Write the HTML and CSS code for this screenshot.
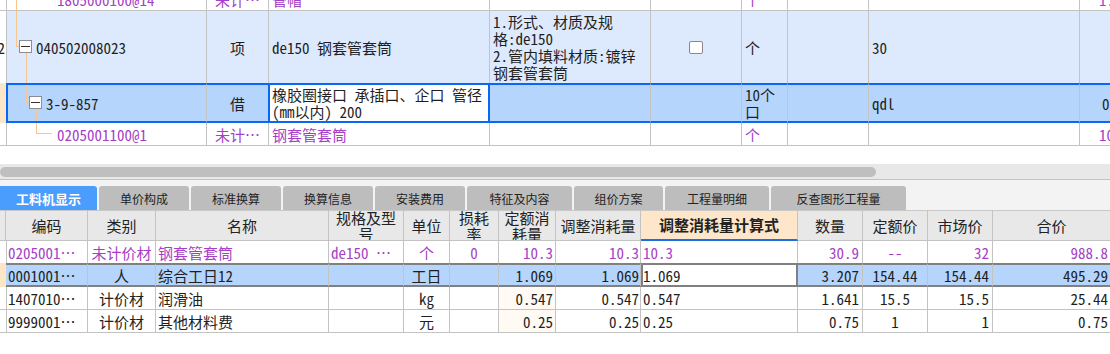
FILE: index.html
```html
<!DOCTYPE html>
<html lang="zh-CN">
<head>
<meta charset="utf-8">
<title>工料机显示</title>
<link rel="stylesheet" href="styles.css">
</head>
<body>
<div class="top">
  <div class="top-inner">
    <div class="trow r0">
      <div class="tc idx"></div>
      <div class="tc code p0 pur"><span class="ln ta0"></span>1805000100@14</div>
      <div class="tc c pur">未计…</div>
      <div class="tc pur">管帽</div>
      <div class="tc"></div>
      <div class="tc"></div>
      <div class="tc pur">个</div>
      <div class="tc"></div>
      <div class="tc"></div>
      <div class="tc last pur">1.545</div>
    </div>
    <div class="trow r1">
      <div class="tc idx">2</div>
      <div class="tc code p1"><span class="ln tb1"></span><span class="ln tb2"></span><span class="bx tb3"></span><span class="ln tb4"></span>040502008023</div>
      <div class="tc c">项</div>
      <div class="tc">de150 钢套管套筒</div>
      <div class="tc"><div>1.形式、材质及规<br>格:de150<br>2.管内填料材质:镀锌<br>钢套管套筒</div></div>
      <div class="tc c"><span class="chk"></span></div>
      <div class="tc">个</div>
      <div class="tc"></div>
      <div class="tc">30</div>
      <div class="tc last"></div>
    </div>
    <div class="trow r2">
      <div class="tc idx"></div>
      <div class="tc code p2"><span class="ln tc1"></span><span class="ln tc2"></span><span class="bx tc3"></span><span class="ln tc4"></span>3-9-857</div>
      <div class="tc c pre">借</div>
      <div class="tc edit"><div>橡胶圈接口 承插口、企口 管径<br>(mm以内) 200</div></div>
      <div class="tc"></div>
      <div class="tc"></div>
      <div class="tc"><div>10个<br>口</div></div>
      <div class="tc"></div>
      <div class="tc">qdl</div>
      <div class="tc last sh">0.103</div>
    </div>
    <div class="trow r3">
      <div class="tc idx"></div>
      <div class="tc code p0 pur"><span class="ln td1"></span><span class="ln td2"></span>0205001100@1</div>
      <div class="tc c pur">未计…</div>
      <div class="tc pur">钢套管套筒</div>
      <div class="tc"></div>
      <div class="tc"></div>
      <div class="tc pur">个</div>
      <div class="tc"></div>
      <div class="tc"></div>
      <div class="tc last pur">10.3</div>
    </div>
  </div>
</div>

<div class="gap"></div>
<div class="hs"><div class="thumb"></div></div>
<div class="hsline"></div>

<div class="tabs">
  <div class="tab on w97">工料机显示</div>
  <div class="tab w90">单价构成</div>
  <div class="tab w90">标准换算</div>
  <div class="tab w90">换算信息</div>
  <div class="tab w90">安装费用</div>
  <div class="tab w105">特征及内容</div>
  <div class="tab w89">组价方案</div>
  <div class="tab w104">工程量明细</div>
  <div class="tab w135">反查图形工程量</div>
</div>

<div class="btable">
  <div class="brow hd">
    <div class="bc idx"></div>
    <div class="bc">编码</div>
    <div class="bc">类别</div>
    <div class="bc">名称</div>
    <div class="bc"><div>规格及型<br>号</div></div>
    <div class="bc">单位</div>
    <div class="bc"><div>损耗<br>率</div></div>
    <div class="bc"><div>定额消<br>耗量</div></div>
    <div class="bc">调整消耗量</div>
    <div class="bc calc">调整消耗量计算式</div>
    <div class="bc">数量</div>
    <div class="bc">定额价</div>
    <div class="bc">市场价</div>
    <div class="bc">合价</div>
  </div>
  <div class="brow d1 pur">
    <div class="bc idx"></div>
    <div class="bc code">0205001…</div>
    <div class="bc c">未计价材</div>
    <div class="bc name">钢套管套筒</div>
    <div class="bc spec">de150 …</div>
    <div class="bc c">个</div>
    <div class="bc c">0</div>
    <div class="bc r q1">10.3</div>
    <div class="bc r q2">10.3</div>
    <div class="bc f">10.3</div>
    <div class="bc r">30.9</div>
    <div class="bc c">--</div>
    <div class="bc r">32</div>
    <div class="bc r tot">988.8</div>
  </div>
  <div class="brow d2">
    <div class="bc idx"></div>
    <div class="bc code">0001001…</div>
    <div class="bc c">人</div>
    <div class="bc name">综合工日12</div>
    <div class="bc spec"></div>
    <div class="bc c">工日</div>
    <div class="bc c"></div>
    <div class="bc r q1">1.069</div>
    <div class="bc r q2">1.069</div>
    <div class="bc f edit">1.069</div>
    <div class="bc r">3.207</div>
    <div class="bc c">154.44</div>
    <div class="bc r">154.44</div>
    <div class="bc r tot">495.29</div>
  </div>
  <div class="brow d3">
    <div class="bc idx"></div>
    <div class="bc code">1407010…</div>
    <div class="bc c">计价材</div>
    <div class="bc name">润滑油</div>
    <div class="bc spec"></div>
    <div class="bc c">kg</div>
    <div class="bc c"></div>
    <div class="bc r q1 pk">0.547</div>
    <div class="bc r q2">0.547</div>
    <div class="bc f">0.547</div>
    <div class="bc r">1.641</div>
    <div class="bc c">15.5</div>
    <div class="bc r">15.5</div>
    <div class="bc r tot">25.44</div>
  </div>
  <div class="brow d3">
    <div class="bc idx"></div>
    <div class="bc code">9999001…</div>
    <div class="bc c">计价材</div>
    <div class="bc name">其他材料费</div>
    <div class="bc spec"></div>
    <div class="bc c">元</div>
    <div class="bc c"></div>
    <div class="bc r q1 pk">0.25</div>
    <div class="bc r q2">0.25</div>
    <div class="bc f">0.25</div>
    <div class="bc r">0.75</div>
    <div class="bc c">1</div>
    <div class="bc r">1</div>
    <div class="bc r tot">0.75</div>
  </div>
</div>
</body>
</html>
```

FILE: styles.css
```css
* { box-sizing: border-box; margin: 0; padding: 0; }
html, body { width: 1110px; height: 354px; overflow: hidden; background: #fff; }
body {
  font-family: "Noto Sans Mono CJK SC", "Noto Sans CJK SC", "DejaVu Sans Mono", monospace;
  font-size: 15px;
  color: #1f1f1f;
}
.pur { color: #a63fc6; }

/* ---------- top tree table ---------- */
.top { height: 146px; overflow: hidden; }
.top-inner { margin-top: -12px; }
.trow {
  display: grid;
  grid-template-columns: 7px 200px 62px 221px 161px 91px 46px 81px 211px 80px;
  width: 1160px;
}
.tc {
  position: relative;
  display: flex;
  align-items: center;
  padding: 0 3px;
  border-right: 1px solid #c3c3c3;
  border-bottom: 1px solid #c3c3c3;
  line-height: 17px;
  white-space: nowrap;
  overflow: hidden;
}
.tc.c { justify-content: center; }
.tc.idx { justify-content: flex-end; padding: 0 1px 0 0; }
.tc.code { overflow: visible; }
.tc.p0 { padding-left: 50px; }
.tc.p1 { padding-left: 29px; }
.tc.p2 { padding-left: 38px; }
.tc.last { padding-left: 19px; }
.tc.last.sh { padding-left: 22px; }

.r0 { height: 23px; }
.r1 { height: 72px; }
.r1 .tc { border-bottom: none; background: #dde9fc; }
.r1 .tc.idx { background: #fff; }
.r2 { height: 40px; }
.r2 .tc {
  background: #b5d5fd;
  border-top: 2px solid #0a66f5;
  border-bottom: 2px solid #0a66f5;
}
.r2 .tc.idx { border: none; border-right: 1px solid #0a66f5; background: #fde5c8; }
.r2 .tc.code { border-left: 1px solid #0a66f5; }
.r2 .tc.pre { border-right-color: #0a66f5; }
.r2 .tc.edit {
  background: #fff;
  border-left: 1px solid #0a66f5;
  border-right: 2px solid #0a66f5;
  padding-left: 2px;
}
.r3 { height: 23px; }

/* tree connectors */
.ln { position: absolute; background: #f7c690; }
.bx { position: absolute; width: 13px; height: 13px; border: 1px solid #8d8d8d; background: #fff; }
.bx::after { content: ""; position: absolute; left: 1px; top: 5px; width: 9px; height: 1px; background: #333; }
.ta0 { left: 9px; top: 0; bottom: -1px; width: 1px; }
.tb1 { left: 9px; top: 0; width: 1px; height: 36px; }
.tb2 { left: 9px; top: 35px; width: 3px; height: 1px; }
.tb3 { left: 12px; top: 29px; }
.tb4 { left: 19px; top: 42px; bottom: 0; width: 1px; }
.tc1 { left: 18px; top: 0; width: 1px; height: 17px; }
.tc2 { left: 18px; top: 17px; width: 3px; height: 1px; }
.tc3 { left: 21px; top: 11px; }
.tc4 { left: 28px; top: 24px; bottom: 0; width: 1px; }
.td1 { left: 29px; top: 0; width: 1px; height: 11px; }
.td2 { left: 29px; top: 10px; width: 16px; height: 1px; }

.chk { width: 14px; height: 13px; border: 1px solid #8a8a8a; border-radius: 2px; background: #fff; }

/* ---------- scrollbar ---------- */
.gap { height: 18px; }
.hs { height: 15px; background: #e8e8e8; padding-top: 3px; }
.thumb { width: 876px; height: 10px; background: #bfbfbf; border-radius: 5px; }
.hsline { height: 1px; background: #c2c2c2; }

/* ---------- tabs ---------- */
.tabs {
  display: flex;
  gap: 2px;
  align-items: flex-end;
  height: 31px;
  padding-top: 6px;
  background: #f3f3f3;
  border-bottom: 1px solid #c8c8c8;
}
.tab {
  height: 24px;
  padding-top: 2px;
  line-height: 22px;
  background: #bdbdbd;
  border-radius: 3px 3px 0 0;
  font-family: "Noto Sans CJK SC", sans-serif;
  font-size: 12px;
  text-align: center;
  color: #222;
}
.tab.on { background: #4a9cfd; color: #fff; font-weight: bold; font-size: 13px; border-radius: 0 3px 0 0; }
.w97 { width: 97px; }
.w90 { width: 90px; }
.w89 { width: 89px; }
.w104 { width: 104px; }
.w105 { width: 105px; }
.w135 { width: 135px; }

/* ---------- bottom grid ---------- */
.brow {
  display: grid;
  grid-template-columns: 6px 82px 68px 173px 75px 46px 49px 57px 85px 157px 65px 65px 65px 118px;
}
.bc {
  display: flex;
  align-items: center;
  padding: 0 3px;
  border-right: 1px solid #c3c3c3;
  border-bottom: 1px solid #c3c3c3;
  white-space: nowrap;
  overflow: hidden;
  line-height: 17px;
}
.bc.c { justify-content: center; }
.bc.r { justify-content: flex-end; }
.bc.code { padding-left: 2px; }
.bc.name { padding-left: 2px; }
.bc.spec { padding-left: 2px; }
.bc.q1 { padding-right: 2px; }
.bc.q2 { padding-right: 1px; }
.bc.f { padding-left: 2px; }
.bc.tot { padding-right: 2px; }
.bc.pk { background: #fffaf3; }

.hd { height: 30px; }
.hd .bc {
  background: #e8e8e8;
  justify-content: center;
  text-align: center;
  white-space: nowrap;
  padding: 0 2px;
  font-family: "Noto Sans CJK SC", sans-serif;
  font-size: 15px;
  line-height: 16px;
  color: #222;
}
.hd .bc.calc { background: #fde6c9; border-bottom: 2px solid #1b6fe2; font-weight: bold; }

.d1 { height: 22px; }
.d1 .bc { border-bottom: none; }
.d2 { height: 24px; }
.d2 .bc {
  background: #b5d5fd;
  border-top: 2px solid #808080;
  border-bottom: 2px solid #808080;
}
.d2 .bc.idx { background: #fde5c8; border: none; border-right: 2px solid #1b6fe2; }
.d2 .bc.edit {
  background: #fff;
  border-left: 2px solid #808080;
  border-right: 2px solid #808080;
  padding-left: 0;
}
.d3 { height: 23px; }
```
